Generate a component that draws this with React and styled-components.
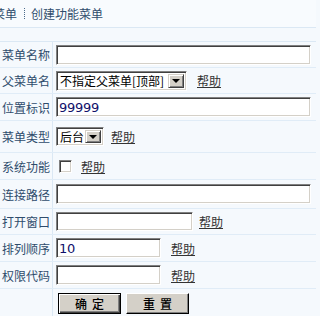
import React from "react";
import styled, { createGlobalStyle } from "styled-components";

const Global = createGlobalStyle`
  html, body { margin: 0; padding: 0; background: #f5f9fd; }
  body { font-family: "Noto Sans CJK SC", "Liberation Sans", sans-serif; font-size: 12px; color: #2f4c6c; overflow: hidden; }
`;

const Page = styled.div`
  width: 316px;
  height: 316px;
  overflow: hidden;
  display: flex;
  flex-direction: column;
  & > * { flex: none; }
`;

const Header = styled.div`
  height: 26px;
  border-bottom: 1px solid #dbe8f4;
  background: #f8fbfe;
  display: flex;
  align-items: center;
  white-space: nowrap;
  color: #2f4c6c;
  font-size: 12px;
  line-height: 14px;
  padding-top: 1px;
  box-sizing: content-box;
`;

const Crumb = styled.span`
  margin-left: -7px;
`;

const Sep = styled.span`
  display: inline-block;
  width: 1px;
  height: 12px;
  margin: 0 6px 0 7px;
  vertical-align: -1px;
  background-image: linear-gradient(#4a6a8a 50%, transparent 50%);
  background-size: 1px 2px;
`;

const Spacer = styled.div`
  height: 13px;
  border-bottom: 1px solid #dbe8f4;
`;

const Form = styled.div`
  display: flex;
  flex-direction: column;
`;

const Row = styled.div`
  display: flex;
  flex: none;
  height: ${(p) => p.$h}px;
  border-bottom: 1px solid #e0ecf7;
  box-sizing: border-box;
`;

const Label = styled.div`
  width: 53px;
  flex: none;
  box-sizing: border-box;
  border-right: 1px solid #dbe8f4;
  padding-left: 2px;
  display: flex;
  align-items: center;
  font-size: 12px;
  color: #2f4c6c;
  white-space: nowrap;
`;

const Field = styled.div`
  flex: 1;
  display: flex;
  align-items: center;
  padding-left: 3px;
`;

const TextInput = styled.input`
  box-sizing: border-box;
  width: ${(p) => p.$w}px;
  height: ${(p) => p.$h || 20}px;
  margin: 0;
  padding: 0 0 0 2px;
  background: #fff;
  border-top: 1px solid #808080;
  border-left: 1px solid #808080;
  border-right: 1px solid #fff;
  border-bottom: 1px solid #fff;
  box-shadow: inset 1px 1px 0 #404040, inset -1px -1px 0 #d4d0c8;
  font-family: "DejaVu Sans", Verdana, sans-serif;
  font-size: 13px;
  letter-spacing: -0.3px;
  color: #10106a;
  outline: none;
`;

const FakeSelect = styled.div`
  box-sizing: border-box;
  width: ${(p) => p.$w}px;
  height: ${(p) => p.$h || 20}px;
  display: flex;
  align-items: center;
  background: #fff;
  border-top: 1px solid #808080;
  border-left: 1px solid #808080;
  border-right: 1px solid #fff;
  border-bottom: 1px solid #fff;
  box-shadow: inset 1px 1px 0 #404040, inset -1px -1px 0 #d4d0c8;
  padding: 2px;
`;

const SelectText = styled.span`
  flex: 1;
  padding-left: 1px;
  font-size: 12px;
  color: #000;
  white-space: nowrap;
  overflow: hidden;
`;

const ArrowBtn = styled.span`
  width: 16px;
  height: 100%;
  box-sizing: border-box;
  flex: none;
  background: #d4d0c8;
  border-top: 1px solid #d4d0c8;
  border-left: 1px solid #d4d0c8;
  border-right: 1px solid #404040;
  border-bottom: 1px solid #404040;
  box-shadow: inset 1px 1px 0 #fff, inset -1px -1px 0 #808080;
  display: flex;
  align-items: center;
  justify-content: center;
  &::after {
    content: "";
    width: 0;
    height: 0;
    border-left: 4px solid transparent;
    border-right: 4px solid transparent;
    border-top: 4px solid #000;
    margin-top: 1px;
  }
`;

const Check = styled.span`
  width: 13px;
  height: 13px;
  box-sizing: border-box;
  margin-left: 3px;
  background: #fff;
  border-top: 1px solid #808080;
  border-left: 1px solid #808080;
  border-right: 1px solid #fff;
  border-bottom: 1px solid #fff;
  box-shadow: inset 1px 1px 0 #404040, inset -1px -1px 0 #d4d0c8;
`;

const Help = styled.a`
  margin-left: ${(p) => p.$ml}px;
  color: #333;
  text-decoration: underline;
  font-size: 12px;
  cursor: pointer;
  white-space: nowrap;
`;

const Buttons = styled.div`
  display: flex;
  gap: 5px;
  padding-left: 5px;
  padding-top: 4px;
`;

const Btn = styled.button`
  box-sizing: border-box;
  width: 63px;
  height: 21px;
  margin: 0;
  padding: 0;
  background: #d4d0c8;
  font-family: "Noto Sans CJK SC", sans-serif;
  font-size: 12px;
  font-weight: 500;
  color: #000;
  letter-spacing: 5px;
  text-indent: 5px;
  border-top: 1px solid ${(p) => (p.$def ? "#000" : "#fff")};
  border-left: 1px solid ${(p) => (p.$def ? "#000" : "#fff")};
  border-right: 1px solid #000;
  border-bottom: 1px solid #000;
  box-shadow: ${(p) =>
    p.$def
      ? "inset 1px 1px 0 #fff, inset -1px -1px 0 #404040, inset -2px -2px 0 #808080"
      : "inset -1px -1px 0 #808080"};
`;

export default function App() {
  return (
    <>
      <Global />
      <Page>
        <Header>
          <Crumb>
            菜单
            <Sep />
            创建功能菜单
          </Crumb>
        </Header>
        <Spacer />
        <Form>
          <Row $h={26}>
            <Label>菜单名称</Label>
            <Field>
              <TextInput $w={255} defaultValue="" />
            </Field>
          </Row>
          <Row $h={26}>
            <Label>父菜单名</Label>
            <Field>
              <FakeSelect $w={131}>
                <SelectText>不指定父菜单[顶部]</SelectText>
                <ArrowBtn />
              </FakeSelect>
              <Help $ml={10}>帮助</Help>
            </Field>
          </Row>
          <Row $h={27}>
            <Label>位置标识</Label>
            <Field>
              <TextInput $w={255} defaultValue="99999" />
            </Field>
          </Row>
          <Row $h={32}>
            <Label>菜单类型</Label>
            <Field>
              <FakeSelect $w={48} $h={19}>
                <SelectText>后台</SelectText>
                <ArrowBtn />
              </FakeSelect>
              <Help $ml={7}>帮助</Help>
            </Field>
          </Row>
          <Row $h={27}>
            <Label>系统功能</Label>
            <Field>
              <Check />
              <Help $ml={9}>帮助</Help>
            </Field>
          </Row>
          <Row $h={29}>
            <Label>连接路径</Label>
            <Field>
              <TextInput $w={255} defaultValue="" />
            </Field>
          </Row>
          <Row $h={26}>
            <Label>打开窗口</Label>
            <Field>
              <TextInput $w={137} $h={19} defaultValue="" />
              <Help $ml={6}>帮助</Help>
            </Field>
          </Row>
          <Row $h={27}>
            <Label>排列顺序</Label>
            <Field>
              <TextInput $w={105} defaultValue="10" />
              <Help $ml={10}>帮助</Help>
            </Field>
          </Row>
          <Row $h={27}>
            <Label>权限代码</Label>
            <Field>
              <TextInput $w={105} defaultValue="" />
              <Help $ml={10}>帮助</Help>
            </Field>
          </Row>
          <Row $h={40}>
            <Label />
            <Buttons>
              <Btn $def>确定</Btn>
              <Btn>重置</Btn>
            </Buttons>
          </Row>
        </Form>
      </Page>
    </>
  );
}
